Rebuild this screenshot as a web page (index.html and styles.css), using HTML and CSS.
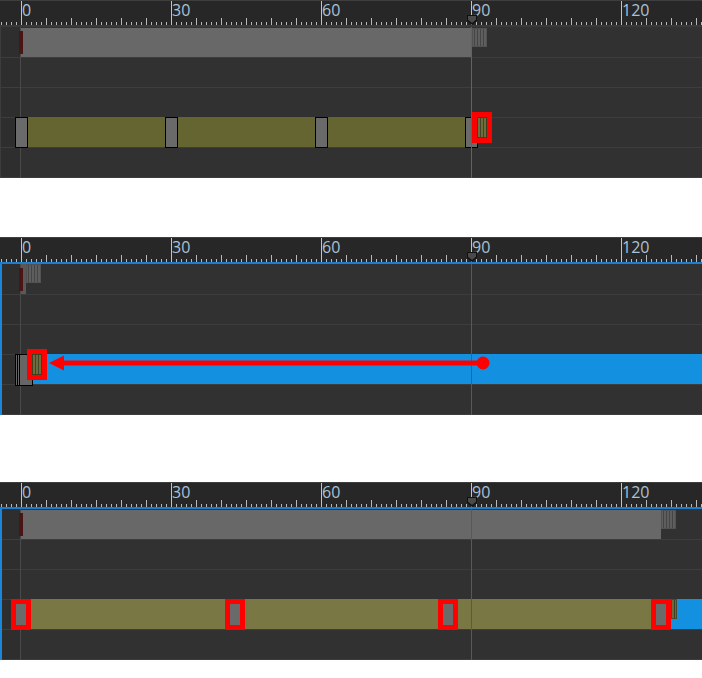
FILE: index.html
```html
<!DOCTYPE html>
<html>
<head>
<meta charset="utf-8">
<link rel="stylesheet" href="styles.css">
</head>
<body>
<div class="page">

  <!-- Panel 1 -->
  <section class="panel p1">
    <div class="ruler">
      <span class="major" style="left:21px"></span><span class="lbl" style="left:22px">0</span>
      <span class="major" style="left:171px"></span><span class="lbl" style="left:172px">30</span>
      <span class="major" style="left:321px"></span><span class="lbl" style="left:322px">60</span>
      <span class="major" style="left:471px"></span><span class="lbl" style="left:472px">90</span>
      <span class="major" style="left:621px"></span><span class="lbl" style="left:622px">120</span>
      <span class="head" style="left:467px"></span>
    </div>
    <div class="divider"></div>
    <div class="rows">
      <div class="row">
        <div class="clip gray" style="left:21px;width:450px"></div>
        <div class="mark" style="left:19px"></div>
        <div class="tail gray-tail" style="left:472px"></div>
      </div>
      <div class="row"></div>
      <div class="row"></div>
      <div class="row">
        <div class="clip olive dark" style="left:21px;width:450px"></div>
        <div class="key" style="left:15px"></div>
        <div class="key" style="left:165px"></div>
        <div class="key" style="left:315px"></div>
        <div class="key" style="left:465px"></div>
        <div class="sel raised" style="left:472px"><span class="olive-tail"></span></div>
      </div>
      <div class="row"></div>
      <div class="gutter"></div>
      <div class="playline"></div>
    </div>
  </section>

  <!-- Panel 2 -->
  <section class="panel p2 active">
    <div class="ruler">
      <span class="major" style="left:21px"></span><span class="lbl" style="left:22px">0</span>
      <span class="major" style="left:171px"></span><span class="lbl" style="left:172px">30</span>
      <span class="major" style="left:321px"></span><span class="lbl" style="left:322px">60</span>
      <span class="major" style="left:471px"></span><span class="lbl" style="left:472px">90</span>
      <span class="major" style="left:621px"></span><span class="lbl" style="left:622px">120</span>
      <span class="head" style="left:467px"></span>
    </div>
    <div class="divider"></div>
    <div class="rows">
      <div class="row">
        <div class="clip slim" style="left:21px;width:5px"></div>
        <div class="mark" style="left:19px"></div>
        <div class="tail gray-tail" style="left:26px"></div>
      </div>
      <div class="row"></div>
      <div class="row"></div>
      <div class="row">
        <div class="clip blue" style="left:32px;width:670px"></div>
        <div class="key stack" style="left:15px"></div>
        <div class="key stack" style="left:17px"></div>
        <div class="key stack" style="left:19px"></div>
        <div class="sel raised" style="left:27px"><span class="olive-tail"></span></div>
      </div>
      <div class="row"></div>
      <div class="gutter"></div>
      <div class="playline"></div>
      <svg class="arrow" width="702" height="30" viewBox="0 0 702 30">
        <line x1="60" y1="15" x2="483" y2="15" stroke="#ff0000" stroke-width="5"/>
        <polygon points="49,15 64,7.5 64,22.5" fill="#ff0000"/>
        <circle cx="483" cy="15" r="6.5" fill="#ff0000"/>
      </svg>
    </div>
  </section>

  <!-- Panel 3 -->
  <section class="panel p3 active">
    <div class="ruler">
      <span class="major" style="left:21px"></span><span class="lbl" style="left:22px">0</span>
      <span class="major" style="left:171px"></span><span class="lbl" style="left:172px">30</span>
      <span class="major" style="left:321px"></span><span class="lbl" style="left:322px">60</span>
      <span class="major" style="left:471px"></span><span class="lbl" style="left:472px">90</span>
      <span class="major" style="left:621px"></span><span class="lbl" style="left:622px">120</span>
      <span class="head" style="left:467px"></span>
    </div>
    <div class="divider"></div>
    <div class="rows">
      <div class="row">
        <div class="clip gray" style="left:21px;width:640px"></div>
        <div class="mark" style="left:19px"></div>
        <div class="tail gray-tail" style="left:661px"></div>
      </div>
      <div class="row"></div>
      <div class="row"></div>
      <div class="row">
        <div class="clip olive light" style="left:21px;width:650px"></div>
        <div class="clip blue" style="left:671px;width:31px"></div>
        <div class="tail olive-small" style="left:671px"></div>
        <div class="sel" style="left:11px"></div>
        <div class="sel" style="left:225px"></div>
        <div class="sel" style="left:438px"></div>
        <div class="sel" style="left:651px"></div>
      </div>
      <div class="row"></div>
      <div class="gutter"></div>
      <div class="playline"></div>
    </div>
  </section>

</div>
</body>
</html>
```
FILE: styles.css
```css
* { box-sizing: border-box; }
html, body { margin: 0; padding: 0; background: #ffffff; }
body { width: 702px; height: 678px; overflow: hidden; font-family: "Open Sans", "Noto Sans", sans-serif; }

.page { display: flex; flex-direction: column; }

.panel { width: 702px; display: flex; flex-direction: column; background: #313131; }
.p2 { margin-top: 59px; }
.p3 { margin-top: 67px; }

.ruler {
  position: relative;
  height: 25px;
  background-color: #272727;
  border-top: 1px solid #3e3e3e;
  background-image:
    linear-gradient(to right, #b9b9b9 0 1px, transparent 1px),
    linear-gradient(to right, #b9b9b9 0 1px, transparent 1px);
  background-size: 5px 3px, 25px 7px;
  background-position: 1px 100%, 21px 100%;
  background-repeat: repeat-x, repeat-x;
}
.major { position: absolute; top: 0; bottom: 0; width: 1px; background: #c4c4c4; }
.lbl {
  position: absolute; top: 0; line-height: 18px;
  font-size: 16px; color: #a9c1d8;
}
.head {
  position: absolute; top: 14px; width: 10px; height: 10px;
  background: #111;
  clip-path: polygon(0 0, 100% 0, 100% 55%, 50% 100%, 0 55%);
}
.head::after {
  content: ""; position: absolute; left: 1px; top: 1px; width: 8px; height: 7px;
  background: #4a4a4a;
  clip-path: polygon(0 0, 100% 0, 100% 55%, 50% 100%, 0 55%);
}

.divider { height: 2px; background: #3a3a3a; }
.active .divider { background: #1a7fd0; }

.rows {
  position: relative; display: flex; flex-direction: column;
  border-bottom: 1px solid #3d3d3d;
  background: linear-gradient(to right, #2e2e2e 0 20px, transparent 20px);
}
.rows::before {
  content: ""; position: absolute; left: 0; top: 0; bottom: -1px; width: 1px; background: #3c3c3c; z-index: 1;
}
.active .rows::before { width: 2px; background: #1a86dc; }

.row { position: relative; height: 30px; border-top: 1px solid #3d3d3d; }
.row:first-child { border-top: none; }

.gutter { position: absolute; left: 20px; top: 0; bottom: -1px; width: 1px; background: #4a4a4a; }
.playline { position: absolute; left: 471px; top: 0; bottom: -1px; width: 1px; background: #1c74bb; z-index: 5; }
.active .playline { background: #2a6396; }

.clip { position: absolute; top: -1px; height: 31px; }
.row:first-child .clip { top: 1px; height: 29px; }
.gray { background: #686868; }
.row:first-child .clip.slim { top: 0; height: 30px; background: #595959; }
.olive.dark { background: #656532; }
.olive.light { background: #797744; }
.blue { background: #1490e0; }

.mark { position: absolute; top: 4px; width: 4px; height: 23px; background: #4a1515; z-index: 2; }

.tail { position: absolute; top: 1px; width: 15px; height: 19px; }
.gray-tail {
  border: 1px solid #525252;
  background: repeating-linear-gradient(to right, #5e5e5e 0 1px, #454545 1px 2px, #5e5e5e 2px 3px);
}
.p2 .gray-tail { top: 0; }
.olive-small {
  top: -1px; width: 6px; height: 20px;
  border: 1px solid #4a4a2c;
  background: repeating-linear-gradient(to right, #6c6a3c 0 2px, #3f3f24 2px 3px);
  z-index: 3;
}

.key {
  position: absolute; top: -1px; width: 13px; height: 31px;
  background: #6a6a6a; border: 1px solid #000; z-index: 2;
}
.key.stack { width: 14px; height: 32px; background: #666; }

.sel {
  position: absolute; top: -1px; width: 20px; height: 31px;
  border: 5px solid #ff0000; background: #6a6a6a; z-index: 4;
  display: flex;
}
.sel.raised { top: -6px; background: transparent; }
.olive-tail {
  flex: 1;
  border: 1px solid #3f3f22;
  background: repeating-linear-gradient(to right, #6f6d3e 0 2px, #45442a 2px 3px);
}

.arrow { position: absolute; left: 0; top: 84px; z-index: 6; }
```
